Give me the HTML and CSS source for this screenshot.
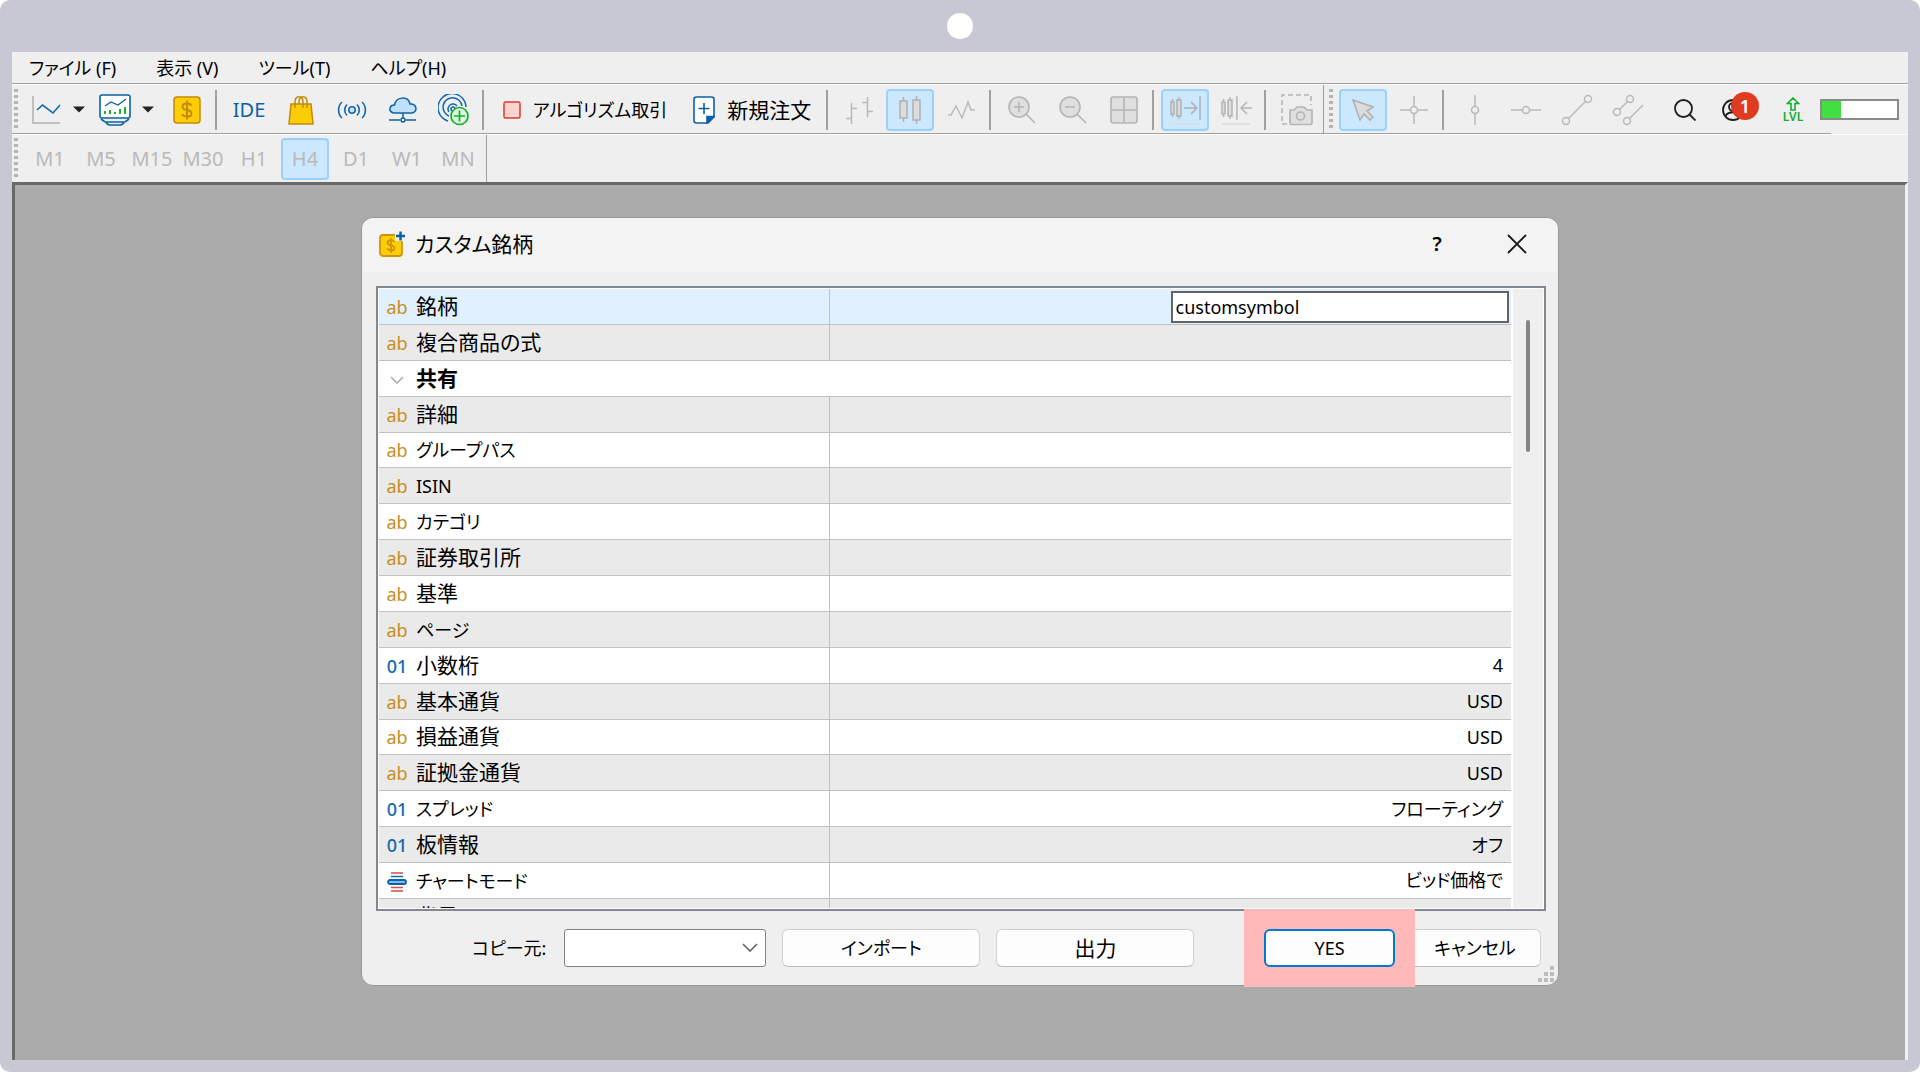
FILE: index.html
```html
<!DOCTYPE html>
<html lang="ja">
<head>
<meta charset="utf-8">
<title>カスタム銘柄</title>
<link rel="stylesheet" href="styles.css">
</head>
<body>
<div class="frame">
  <div class="frame-top"><span class="camera"></span></div>
  <div class="app">
    <nav class="menubar">
      <button class="menu">ファイル (F)</button>
      <button class="menu">表示 (V)</button>
      <button class="menu">ツール(T)</button>
      <button class="menu">ヘルプ(H)</button>
    </nav>

    <div class="toolbar toolbar-main">
      <div class="band band-first">
        <span class="grip"></span>
        <div class="splits">
          <div class="split">
            <button class="tool" aria-label="チャート種類"><svg width="30" height="30" viewBox="0 0 30 30" fill="none"><path d="M2 1v27h27" stroke="#b0b0b0" stroke-width="1.5"/><path d="M6 15l5.500-5 10.500 8 7-8" stroke="#1469ad" stroke-width="1.600"/></svg></button>
            <button class="drop" aria-label="チャート種類を選択"><svg width="12" height="7" viewBox="0 0 12 7"><path d="M0 0.500h12l-6 6z" fill="#222"/></svg></button>
          </div>
          <div class="split">
            <button class="tool" aria-label="プロファイル"><svg width="32" height="32" viewBox="0 0 32 32" fill="none" stroke="#0b62a8" stroke-width="1.600"><rect x="1" y="1" width="30" height="23" rx="2" fill="#fff"/><path d="M2 25l4 3h20l4-3M7 29l3 2h12l3-2" stroke-width="1.700"/><path d="M6 12l6-4 7 3 8-6" stroke-width="1.300"/><path d="M6 20v-3M11 20v-4M16 20v-2M21 20v-5M26 20v-7" stroke="#18b531" stroke-width="2"/></svg></button>
            <button class="drop" aria-label="プロファイルを選択"><svg width="12" height="7" viewBox="0 0 12 7"><path d="M0 0.500h12l-6 6z" fill="#222"/></svg></button>
          </div>
        </div>
        <button class="tool" aria-label="銘柄"><svg width="28" height="28" viewBox="0 0 28 28" fill="none" stroke="#c48a0a"><rect x="1" y="1" width="26" height="26" rx="3" fill="#fdce06" stroke-width="1.500"/><path d="M18.500 9.500c-1-1.500-2.500-2-4.500-2-6 0-6 5.500 0 6.500s6 6.500 0 6.500c-2.500 0-4-.7-5-2.300M14 4.500v19" stroke-width="2"/></svg></button>
        <span class="sep"></span>
        <button class="tool tool-ide">IDE</button>
        <button class="tool" aria-label="マーケット"><svg width="26" height="30" viewBox="0 0 26 30" fill="none" stroke="#c48a0a" stroke-width="1.500"><path d="M3 9h20l2 20H1z" fill="#fdce06"/><path d="M7 13V7c0-7 8-7 8 0v6M11 9V7c0-7 8-7 8 0v6"/></svg></button>
        <button class="tool" aria-label="シグナル"><svg width="30" height="20" viewBox="0 0 30 20" fill="none" stroke="#1469ad" stroke-width="1.600"><circle cx="15" cy="10" r="3.200" fill="#cfe6fa"/><path d="M10 4.500c-3 3-3 8 0 11M20 4.500c3 3 3 8 0 11M5 2c-4.500 4-4.500 12 0 16M25 2c4.500 4 4.500 12 0 16"/></svg></button>
        <button class="tool" aria-label="VPS"><svg width="30" height="26" viewBox="0 0 30 26" fill="none" stroke="#0b62a8" stroke-width="1.500"><path d="M6 16c-6-1-5-8 .5-8C8-.5 20-1.500 22 7c7-.5 8 8 2 9z" fill="#bfe1fc"/><path d="M15 16v5M1 23h11M18 23h10"/><circle cx="15" cy="23" r="2"/></svg></button>
        <button class="tool" aria-label="コピートレード"><svg width="32" height="32" viewBox="0 0 32 32" fill="none" stroke="#1469ad" stroke-width="1.500"><path d="M10 27A14 14 0 1 1 28 13M11 22A9.500 9.500 0 1 1 24 12M11 18a5 5 0 1 1 8-6"/><circle cx="15" cy="15" r="2"/><circle cx="21.500" cy="22" r="8.500" fill="#dcf7dd" stroke="#16ad30" stroke-width="1.700"/><path d="M16 22h11M21.500 16.500v11" stroke="#16ad30" stroke-width="1.700"/></svg></button>
        <span class="sep"></span>
        <button class="tool tool-text"><svg width="18" height="18" viewBox="0 0 18 18"><rect x="1" y="1" width="16" height="16" rx="1.500" fill="#fdd3ce" stroke="#dc3a34" stroke-width="1.500"/></svg><span class="kana">アルゴリズム取引</span></button>
        <button class="tool tool-text"><svg width="22" height="28" viewBox="0 0 22 28" fill="none" stroke="#0b62a8" stroke-width="1.600"><path d="M3.500 1h15Q21 1 21 3.500V21l-6 6H3.500Q1 27 1 24.500v-21Q1 1 3.500 1z" fill="#fff"/><path d="M14 27v-6.500h7z" fill="#0b62a8"/><path d="M5.500 12.500h11M11 7v11"/></svg><span class="kanji">新規注文</span></button>
        <span class="sep"></span>
        <button class="tool" aria-label="バーチャート"><svg width="28" height="28" viewBox="0 0 28 28" fill="none" stroke="#b9b9b9" stroke-width="1.500"><path d="M6.500 7v21M1 22.500h5.500M6.500 12.500H12M22.500 1v20M17 6.500h5.500M22.500 15.500H28"/></svg></button>
        <button class="tool is-on" aria-label="ローソク足"><svg width="24" height="28" viewBox="0 0 24 28" fill="#dcdcdc" stroke="#b0b0b0" stroke-width="1.500"><path d="M5.500 1v25M18.500 0v28"/><rect x="2" y="5" width="7" height="17"/><rect x="15" y="4" width="7" height="20"/></svg></button>
        <button class="tool" aria-label="ラインチャート"><svg width="28" height="20" viewBox="0 0 28 20" fill="none" stroke="#b9b9b9" stroke-width="1.500"><path d="M1 15h3l5-9 6 12 6-16 3 8h4"/></svg></button>
        <span class="sep"></span>
        <button class="tool" aria-label="拡大"><svg width="28" height="28" viewBox="0 0 28 28" fill="none" stroke="#b5b5b5" stroke-width="1.600"><circle cx="11" cy="11" r="10" fill="#dfdfdf"/><path d="M18 18l9 9M6 11h10M11 6v10"/></svg></button>
        <button class="tool" aria-label="縮小"><svg width="28" height="28" viewBox="0 0 28 28" fill="none" stroke="#b5b5b5" stroke-width="1.600"><circle cx="11" cy="11" r="10" fill="#dfdfdf"/><path d="M18 18l9 9M6 11h10"/></svg></button>
        <button class="tool" aria-label="タイル表示"><svg width="28" height="28" viewBox="0 0 28 28" fill="#dfdfdf" stroke="#b5b5b5" stroke-width="1.600"><rect x="1" y="1" width="26" height="26" rx="2.500"/><path d="M14 1v26M1 14h26"/></svg></button>
        <span class="sep"></span>
        <button class="tool is-on" aria-label="自動スクロール"><svg width="32" height="30" viewBox="0 0 32 30" fill="#dcdcdc" stroke="#aeb0b2" stroke-width="1.500"><path d="M3.500 4v18M10 2v22"/><rect x="2" y="7" width="3" height="12"/><rect x="8" y="5" width="4" height="16"/><path d="M15 13h12M22 7l6 6-6 6" fill="none"/><path d="M31 1v24"/><path d="M1 29h30" stroke="#dcdcdc"/></svg></button>
        <button class="tool" aria-label="チャートシフト"><svg width="32" height="30" viewBox="0 0 32 30" fill="#dcdcdc" stroke="#b5b5b5" stroke-width="1.500"><path d="M3.500 4v18M10 2v22"/><rect x="2" y="7" width="3" height="12"/><rect x="8" y="5" width="4" height="16"/><path d="M32 13H21M27 7l-6 6 6 6" fill="none"/><path d="M17 1v24"/><path d="M1 29h30" stroke="#dcdcdc"/></svg></button>
        <span class="sep"></span>
        <button class="tool" aria-label="スクリーンショット"><svg width="32" height="32" viewBox="0 0 32 32" fill="none" stroke="#b5b5b5" stroke-width="1.600"><path d="M6 30H1V1h29v10" stroke-dasharray="5 3"/><path d="M9 16h4l3-3h7l3 3h5v13q0 1.500-1.500 1.500h-19Q9 30.500 9 29z" fill="#dfdfdf"/><circle cx="19.500" cy="22" r="4"/></svg></button>
      </div>
      <div class="band band-draw">
        <span class="grip"></span>
        <button class="tool is-on" aria-label="カーソル"><svg width="24" height="24" viewBox="0 0 24 24" fill="#dcdcdc" stroke="#b0b0b0" stroke-width="1.600"><path d="M2 2l20 7-6 4 6 6-3 3-6-6-4 6z"/></svg></button>
        <button class="tool" aria-label="十字線"><svg width="28" height="28" viewBox="0 0 28 28" fill="none" stroke="#b9b9b9" stroke-width="1.500"><circle cx="14" cy="14" r="3.500"/><path d="M0 14h10.500M17.500 14H28M14 0v10.500M14 17.500V28"/></svg></button>
        <span class="sep"></span>
        <button class="tool" aria-label="垂直線"><svg width="30" height="30" viewBox="0 0 30 30" fill="none" stroke="#b9b9b9" stroke-width="1.500"><circle cx="15" cy="15" r="3.500"/><path d="M15 0v11.500M15 18.500V30"/></svg></button>
        <button class="tool" aria-label="水平線"><svg width="30" height="30" viewBox="0 0 30 30" fill="none" stroke="#b9b9b9" stroke-width="1.500"><circle cx="15" cy="15" r="3.500"/><path d="M0 15h11.500M18.500 15H30"/></svg></button>
        <button class="tool" aria-label="トレンドライン"><svg width="32" height="32" viewBox="0 0 32 32" fill="none" stroke="#b9b9b9" stroke-width="1.500"><circle cx="5" cy="27" r="3.500"/><circle cx="27" cy="5" r="3.500"/><path d="M7.500 24.500l17-17"/></svg></button>
        <button class="tool" aria-label="チャネル"><svg width="32" height="32" viewBox="0 0 32 32" fill="none" stroke="#b9b9b9" stroke-width="1.500"><circle cx="5" cy="18" r="3.500"/><circle cx="18" cy="5" r="3.500"/><circle cx="15" cy="27" r="3.500"/><path d="M7.500 15.500l8-8M17.500 24.500L31 11"/></svg></button>
      </div>
      <div class="status">
        <button class="tool" aria-label="検索"><svg width="22" height="22" viewBox="0 0 22 22" fill="none" stroke="#1e1e1e" stroke-width="1.800"><circle cx="9.500" cy="9.500" r="8.500"/><path d="M15.500 15.500l6 6"/></svg></button>
        <button class="tool tool-account" aria-label="通知 1 件"><svg width="22" height="22" viewBox="0 0 22 22" fill="none" stroke="#1e1e1e" stroke-width="1.800"><circle cx="11" cy="11" r="10"/><circle cx="11" cy="8" r="4"/><path d="M3.500 17c3-5 12-5 15 0"/></svg><span class="badge">1</span></button>
        <button class="tool level" aria-label="レベル"><svg width="14" height="14" viewBox="0 0 14 14" fill="none" stroke="#16ad30" stroke-width="1.600"><path d="M7 1l5.500 5.500H9V13H5V6.500H1.500z"/></svg><span>LVL</span></button>
        <div class="meter"><span class="meter-fill"></span></div>
      </div>
    </div>

    <div class="toolbar toolbar-time">
      <div class="band">
        <span class="grip"></span>
        <button class="tool">M1</button>
        <button class="tool">M5</button>
        <button class="tool">M15</button>
        <button class="tool">M30</button>
        <button class="tool">H1</button>
        <button class="tool is-on">H4</button>
        <button class="tool">D1</button>
        <button class="tool">W1</button>
        <button class="tool">MN</button>
      </div>
    </div>

    <main class="workspace">
      <section class="dialog" role="dialog" aria-labelledby="dialog-title">
        <header class="titlebar">
          <svg width="26" height="26" viewBox="0 0 26 26" fill="none" stroke="#d19408"><rect x="1" y="4" width="22" height="21" rx="3" fill="#fdce06" stroke-width="1.800"/><path d="M15.500 11c-1-1.300-2-1.800-3.500-1.800-4.500 0-4.500 4.300 0 5.100s4.500 5.200 0 5.200c-2 0-3-.6-4-1.800M12 7v15" stroke-width="1.800"/><path d="M16 0h10v10H16z" fill="#f3f3f3" stroke="none"/><path d="M17 5h9M21.500.5v9" stroke="#0b62a8" stroke-width="2.500"/></svg>
          <h1 id="dialog-title">カスタム銘柄</h1>
          <button class="title-btn" aria-label="ヘルプ"><span>?</span></button>
          <button class="title-btn" aria-label="閉じる"><svg width="20" height="20" viewBox="0 0 20 20"><path d="M1 1l18 18M19 1L1 19" stroke="#1a1a1a" stroke-width="1.800"/></svg></button>
        </header>

        <div class="list">
          <div class="list-view">
            <table class="props">
              <colgroup><col class="col-name"><col></colgroup>
              <tbody>
                <tr class="is-selected"><th><span class="kind">ab</span><label for="symbol">銘柄</label></th><td><input id="symbol" class="cell-input" type="text" value="customsymbol"></td></tr>
                <tr><th><span class="kind">ab</span>複合商品の式</th><td></td></tr>
                <tr class="group"><th colspan="2"><span class="kind kind-icon"><svg width="14" height="9" viewBox="0 0 14 9" fill="none"><path d="M1 1l6 6 6-6" stroke="#b0b0b0" stroke-width="1.600"/></svg></span>共有</th></tr>
                <tr><th><span class="kind">ab</span>詳細</th><td></td></tr>
                <tr><th><span class="kind">ab</span><span class="kana">グループパス</span></th><td></td></tr>
                <tr><th><span class="kind">ab</span><span class="latin">ISIN</span></th><td></td></tr>
                <tr><th><span class="kind">ab</span><span class="kana">カテゴリ</span></th><td></td></tr>
                <tr><th><span class="kind">ab</span>証券取引所</th><td></td></tr>
                <tr><th><span class="kind">ab</span>基準</th><td></td></tr>
                <tr><th><span class="kind">ab</span><span class="kana">ページ</span></th><td></td></tr>
                <tr><th><span class="kind kind-num">01</span>小数桁</th><td>4</td></tr>
                <tr><th><span class="kind">ab</span>基本通貨</th><td>USD</td></tr>
                <tr><th><span class="kind">ab</span>損益通貨</th><td>USD</td></tr>
                <tr><th><span class="kind">ab</span>証拠金通貨</th><td>USD</td></tr>
                <tr><th><span class="kind kind-num">01</span><span class="kana">スプレッド</span></th><td>フローティング</td></tr>
                <tr><th><span class="kind kind-num">01</span>板情報</th><td>オフ</td></tr>
                <tr><th><span class="kind kind-icon"><svg width="20" height="20" viewBox="0 0 20 20" fill="none"><path d="M4 1h12M4 15.500h12M4 19h12" stroke="#dc4a42" stroke-width="1.500"/><path d="M4 4.500h12" stroke="#1469ad" stroke-width="1.500"/><rect x="1" y="8" width="18" height="4" rx="2" fill="#7fbdf0" stroke="#0b62a8" stroke-width="1.800"/></svg></span><span class="kana">チャートモード</span></th><td>ビッド価格で</td></tr>
                <tr><th><span class="kind"></span>背景</th><td></td></tr>
              </tbody>
            </table>
          </div>
          <div class="scrollbar"><span class="thumb"></span></div>
        </div>

        <footer class="actions">
          <label class="copy-label" for="copy-from">コピー元:</label>
          <div class="select-wrap">
            <select id="copy-from"><option></option></select>
            <svg width="16" height="10" viewBox="0 0 16 10" fill="none"><path d="M1 1l7 7 7-7" stroke="#666" stroke-width="1.600"/></svg>
          </div>
          <button class="btn">インポート</button>
          <button class="btn kanji">出力</button>
          <div class="confirm">
            <span class="marker"><button class="btn btn-primary">YES</button></span>
            <button class="btn btn-cancel">キャンセル</button>
          </div>
        </footer>
        <svg class="resize" width="16" height="16" viewBox="0 0 16 16" fill="#bdbdbd"><path d="M12 0h4v4h-4zM6 6h4v4H6zM12 6h4v4h-4zM0 12h4v4H0zM6 12h4v4H6zM12 12h4v4h-4z"/></svg>
      </section>
    </main>
  </div>
</div>
</body>
</html>
```
FILE: styles.css
```css
* {
  box-sizing: border-box;
}

body {
  margin: 0;
  background: #fff;
  color: #000;
  font-family: "Noto Sans", "Noto Sans CJK JP", sans-serif;
  font-size: 18px;
  line-height: 28px;
  font-feature-settings: "palt";
}

button,
input,
select {
  margin: 0;
  padding: 0;
  border: 0;
  background: none;
  color: inherit;
  font: inherit;
  font-feature-settings: inherit;
}

svg {
  display: block;
  flex: none;
}

.kanji {
  font-size: 21px;
}

.kana,
.latin {
  font-size: 18px;
}

.frame {
  display: flex;
  flex-direction: column;
  min-height: 100vh;
  padding: 0 12px 12px;
  border-radius: 10px;
  background: #c8c7d4;
}

.frame-top {
  display: flex;
  align-items: center;
  justify-content: center;
  height: 52px;
}

.camera {
  width: 26px;
  height: 26px;
  border-radius: 50%;
  background: #fff;
}

.app {
  display: flex;
  flex: 1;
  flex-direction: column;
  background: #efefef;
}

/* Menu and toolbars */

.menubar {
  display: flex;
  gap: 40px;
  height: 32px;
  padding: 0 17px;
  border-bottom: 1px solid #a0a0a0;
}

.menu {
  white-space: nowrap;
}

.toolbar {
  display: flex;
  border-top: 1px solid #fff;
}

.toolbar-main {
  height: 50px;
  padding-right: 9px;
  background: linear-gradient(#a0a0a0, #a0a0a0) left bottom / calc(100% - 77px) 1px no-repeat;
}

.toolbar-time {
  height: 48px;
  color: #b9b9b9;
  font-size: 20px;
}

.band {
  display: flex;
  align-items: center;
  gap: 3px;
  padding: 0 2px;
}

.band-first,
.toolbar-time .band {
  border-right: 1px solid #a0a0a0;
}

.toolbar-time .band {
  padding-right: 4px;
}

.band-draw {
  padding-left: 5px;
}

.grip {
  width: 4px;
  height: 42px;
  margin-right: 1px;
  background: repeating-linear-gradient(#b5b5b5 0 3px, transparent 3px 6px);
}

.band-draw .grip {
  margin-right: 3px;
}

.toolbar-time .grip {
  margin-right: 5px;
}

.splits,
.split {
  display: flex;
}

.splits {
  gap: 3px;
  margin-right: 3px;
}

.tool {
  display: flex;
  align-items: center;
  justify-content: center;
  width: 48px;
  height: 42px;
  border: 1px solid transparent;
  border-radius: 4px;
}

.is-on {
  border: 2px solid #99d1ff;
  background: #cce8ff;
}

.drop {
  display: flex;
  align-items: center;
  justify-content: center;
  width: 18px;
}

.tool-ide {
  width: 50px;
  color: #0b62a8;
  font-size: 20px;
}

.tool-text {
  gap: 12px;
  width: auto;
  padding: 0 10px 0 11px;
  white-space: nowrap;
}

.sep {
  width: 2px;
  height: 40px;
  margin: 0 4px 0 1px;
  background: #a0a0a0;
}

.status {
  display: flex;
  align-items: center;
  gap: 3px;
  margin-left: auto;
}

.tool-account {
  position: relative;
  padding-right: 6px;
}

.badge {
  position: absolute;
  top: 2px;
  left: 18px;
  width: 28px;
  height: 28px;
  border-radius: 50%;
  background: #e03a20;
  color: #fff;
  font-weight: 600;
}

.level {
  flex-direction: column;
  margin-left: 6px;
  color: #16ad30;
  font-size: 12px;
  font-weight: 600;
  line-height: 12px;
}

.meter {
  display: flex;
  width: 79px;
  height: 21px;
  border: 2px solid #8a8a8a;
  background: #fff;
}

.meter-fill {
  width: 25%;
  background: #40e040;
}

/* Workspace and dialog */

.workspace {
  flex: 1;
  padding: 32px 0;
  border: solid #696969;
  border-width: 3px 0 0 3px;
  border-right: 3px solid #f0f0f0;
  background: #ababab;
}

.dialog {
  position: relative;
  width: 1198px;
  max-width: 100%;
  margin: 0 auto;
  border: 1px solid #989898;
  border-radius: 12px;
  background: #efefef;
}

.titlebar {
  display: flex;
  align-items: center;
  height: 54px;
  padding: 0 1px 3px 17px;
  border-radius: 12px 12px 0 0;
  background: #f3f3f3;
}

.titlebar h1 {
  flex: 1;
  margin: 0 0 0 10px;
  font-size: 21px;
  font-weight: 400;
}

.title-btn {
  display: flex;
  align-items: center;
  justify-content: center;
  width: 80px;
  height: 48px;
  font-size: 20px;
  font-weight: 600;
}

.list {
  display: flex;
  margin: 14px 12px 0 14px;
  padding: 1px;
  border: 2px solid #828790;
  background: #fff;
}

.list-view {
  flex: 1;
  height: 619px;
  overflow: hidden;
}

.props {
  width: 100%;
  height: 646px;
  border-collapse: separate;
  border-spacing: 0;
  table-layout: fixed;
}

.col-name {
  width: 451px;
}

.props tr:nth-child(even) {
  background: #eaeaea;
}

.props .is-selected {
  background: #e0f0fe;
}

.props th,
.props td {
  height: 35px;
  padding: 0;
  border-bottom: 1px solid #c0c0c0;
  font-weight: 400;
  text-align: left;
  white-space: nowrap;
}

.props th {
  border-right: 1px solid #c0c0c0;
  font-size: 21px;
}

.props .group th {
  border-right: 0;
  font-weight: 700;
}

.props td {
  padding-right: 8px;
  text-align: right;
}

.props .is-selected td {
  padding: 2px 2px 0;
}

.kind {
  display: inline-flex;
  justify-content: center;
  width: 20px;
  margin: 0 9px 0 8px;
  color: #c98d1f;
  font-size: 18px;
  font-weight: 400;
}

.kind-num {
  color: #1469ad;
  font-weight: 500;
}

.kind-icon {
  vertical-align: middle;
}

.cell-input {
  display: block;
  width: 50%;
  height: 32px;
  margin-left: auto;
  padding: 0 3px;
  border: 2px solid #646464;
  background: #fff;
}

.scrollbar {
  display: flex;
  justify-content: center;
  width: 30px;
  margin-left: 2px;
  padding-top: 31px;
  background: #efefef;
}

.thumb {
  width: 4px;
  height: 132px;
  border-radius: 2px;
  background: #858585;
}

.actions {
  display: flex;
  align-items: flex-start;
  gap: 16px;
  padding: 18px 17px 18px 110px;
  line-height: 38px;
}

.copy-label {
  padding-right: 2px;
}

.select-wrap {
  display: grid;
  align-items: center;
  width: 202px;
}

.select-wrap > * {
  grid-area: 1 / 1;
}

.select-wrap svg {
  justify-self: end;
  margin-right: 8px;
  pointer-events: none;
}

.select-wrap select {
  width: 100%;
  height: 38px;
  border: 1px solid #858585;
  border-radius: 3px;
  background: #fff;
  appearance: none;
}

.btn {
  width: 198px;
  height: 38px;
  border: 1px solid #d0d0d0;
  border-bottom-color: #bcbcbc;
  border-radius: 6px;
  background: #fdfdfd;
  line-height: 28px;
  text-align: center;
}

.confirm {
  display: flex;
  align-items: flex-start;
  margin-left: auto;
}

.marker {
  z-index: 1;
  margin: -20px -6px -20px 0;
  padding: 20px;
  background: #ffb9b9;
  line-height: 0;
}

.btn-primary {
  width: 131px;
  border: 2px solid #0078d4;
}

.btn-cancel {
  width: 132px;
}

.resize {
  position: absolute;
  right: 4px;
  bottom: 3px;
}
```
